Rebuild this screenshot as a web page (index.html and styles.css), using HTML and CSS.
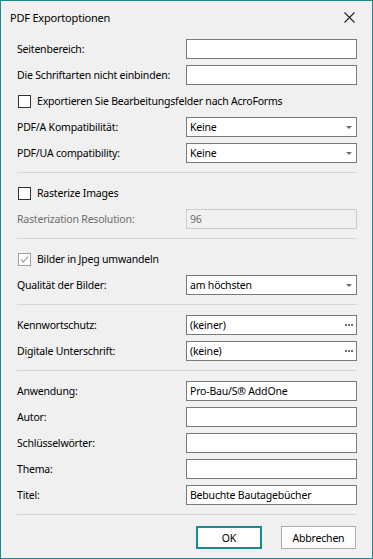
FILE: index.html
```html
<!DOCTYPE html>
<html>
<head>
  <title>PDF Exportoptionen</title>
  <link rel="stylesheet" href="styles.css">
</head>
<body>
  <div class="window">
    <div class="titlebar">
      <span class="title">PDF Exportoptionen</span>
      <svg class="close" width="11" height="11" viewBox="0 0 11 11">
        <path d="M0.5 0.5 L10.5 10.5 M10.5 0.5 L0.5 10.5" stroke="#222" stroke-width="1.1" fill="none"/>
      </svg>
    </div>

    <div class="content">
      <div class="row">
        <label class="lbl">Seitenbereich:</label>
        <div class="field"></div>
      </div>
      <div class="row">
        <label class="lbl">Die Schriftarten nicht einbinden:</label>
        <div class="field"></div>
      </div>
      <div class="row check-row">
        <span class="box"></span>
        <span>Exportieren Sie Bearbeitungsfelder nach AcroForms</span>
      </div>
      <div class="row">
        <label class="lbl">PDF/A Kompatibilität:</label>
        <div class="field combo"><span>Keine</span><span class="arrow"></span></div>
      </div>
      <div class="row">
        <label class="lbl">PDF/UA compatibility:</label>
        <div class="field combo"><span>Keine</span><span class="arrow"></span></div>
      </div>

      <div class="sep"></div>

      <div class="row check-row">
        <span class="box"></span>
        <span>Rasterize Images</span>
      </div>
      <div class="row">
        <label class="lbl disabled">Rasterization Resolution:</label>
        <div class="field field-disabled"><span>96</span></div>
      </div>

      <div class="sep"></div>

      <div class="row check-row">
        <span class="box box-checked">
          <svg width="11" height="11" viewBox="0 0 11 11"><path d="M2 5.5 L4.3 8 L9 2.5" stroke="#8c8c8c" stroke-width="1.1" fill="none"/></svg>
        </span>
        <span>Bilder in Jpeg umwandeln</span>
      </div>
      <div class="row">
        <label class="lbl">Qualität der Bilder:</label>
        <div class="field combo"><span>am höchsten</span><span class="arrow"></span></div>
      </div>

      <div class="sep"></div>

      <div class="row">
        <label class="lbl">Kennwortschutz:</label>
        <div class="field combo"><span>(keiner)</span>
          <svg class="dots" width="8" height="2" viewBox="0 0 8 2"><rect x="0" y="0" width="2" height="2" fill="#707070"/><rect x="3" y="0" width="2" height="2" fill="#707070"/><rect x="6" y="0" width="2" height="2" fill="#707070"/></svg>
        </div>
      </div>
      <div class="row">
        <label class="lbl">Digitale Unterschrift:</label>
        <div class="field combo"><span>(keine)</span>
          <svg class="dots" width="8" height="2" viewBox="0 0 8 2"><rect x="0" y="0" width="2" height="2" fill="#707070"/><rect x="3" y="0" width="2" height="2" fill="#707070"/><rect x="6" y="0" width="2" height="2" fill="#707070"/></svg>
        </div>
      </div>

      <div class="sep"></div>

      <div class="row">
        <label class="lbl">Anwendung:</label>
        <div class="field"><span>Pro-Bau/S® AddOne</span></div>
      </div>
      <div class="row">
        <label class="lbl">Autor:</label>
        <div class="field"></div>
      </div>
      <div class="row">
        <label class="lbl">Schlüsselwörter:</label>
        <div class="field"></div>
      </div>
      <div class="row">
        <label class="lbl">Thema:</label>
        <div class="field"></div>
      </div>
      <div class="row">
        <label class="lbl">Titel:</label>
        <div class="field"><span>Bebuchte Bautagebücher</span></div>
      </div>

      <div class="sep"></div>
    </div>

    <div class="buttons">
      <button class="btn btn-ok">OK</button>
      <button class="btn btn-cancel">Abbrechen</button>
    </div>
  </div>
</body>
</html>
```

FILE: styles.css
```css
body {
  margin: 0;
  background-color: #f0f0f0;
  font-family: "Noto Sans", "Open Sans", sans-serif;
  font-size: 10.5px;
  letter-spacing: -0.2px;
  color: #000;
}

.window {
  width: 373px;
  height: 559px;
  box-sizing: border-box;
  border: 1px solid #1a8b8d;
  background-color: #f0f0f0;
}

.titlebar {
  height: 31px;
  display: flex;
  align-items: center;
  justify-content: space-between;
  padding: 0 17px 0 9px;
}

.title {
  font-size: 11px;
  padding-top: 1px;
}

.close {
  display: block;
  margin-top: 1px;
}

.content {
  display: flex;
  flex-direction: column;
  gap: 6px;
  padding: 7px 15px 0 16px;
}

.row {
  display: flex;
  align-items: center;
  height: 20px;
}

.lbl {
  width: 169px;
  flex-shrink: 0;
  white-space: nowrap;
}

.disabled {
  color: #6d6d6d;
}

.field {
  flex: 1;
  height: 20px;
  box-sizing: border-box;
  border: 1px solid #7a7a7a;
  background-color: #fff;
  display: flex;
  align-items: center;
  padding: 0 3px;
}

.field-disabled {
  background-color: #f0f0f0;
  border-color: #cccccc;
  color: #6d6d6d;
}

.combo {
  justify-content: space-between;
}

.arrow {
  width: 0;
  height: 0;
  border-left: 3px solid transparent;
  border-right: 3px solid transparent;
  border-top: 3px solid #6a6a6a;
  margin-right: 1px;
}

.dots {
  display: block;
  margin-right: 0;
}

.check-row {
  padding-left: 1px;
}

.box {
  width: 13px;
  height: 13px;
  box-sizing: border-box;
  border: 1px solid #333;
  background-color: #fff;
  margin-right: 6px;
  display: flex;
  align-items: center;
  justify-content: center;
}

.box-checked {
  border-color: #a0a0a0;
}

.box svg {
  display: block;
}

.sep {
  height: 1px;
  background-color: #d5d5d5;
  margin: 3px 0 4px 0;
}

.buttons {
  display: flex;
  justify-content: flex-end;
  gap: 19px;
  padding: 7px 16px 0 0;
}

.btn {
  height: 23px;
  box-sizing: border-box;
  font-family: "Noto Sans", "Open Sans", sans-serif;
  font-size: 10.5px;
  letter-spacing: -0.2px;
  color: #000;
  background-color: #fdfdfd;
  border: 1px solid #adadad;
  padding: 0;
}

.btn-ok {
  width: 66px;
  border: 2px solid #1a8b8d;
}

.btn-cancel {
  width: 75px;
}
```
